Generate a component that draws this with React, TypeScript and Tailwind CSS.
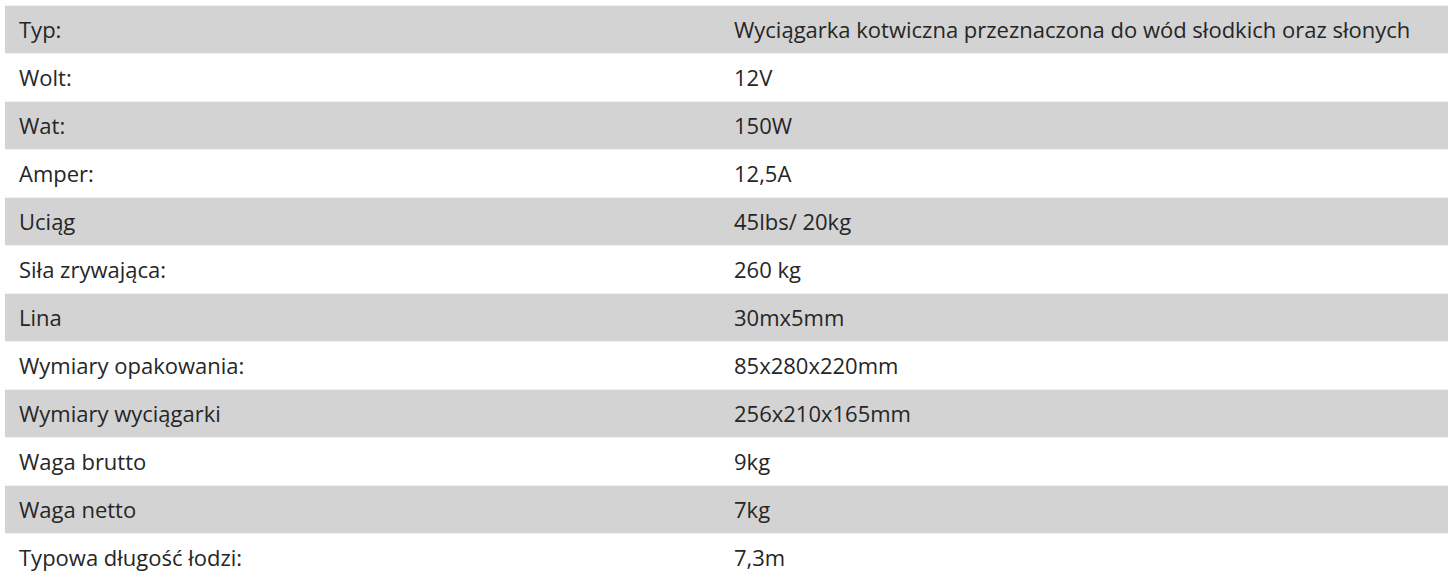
const rows: [string, string][] = [
  ['Typ:', 'Wyciągarka kotwiczna przeznaczona do wód słodkich oraz słonych'],
  ['Wolt:', '12V'],
  ['Wat:', '150W'],
  ['Amper:', '12,5A'],
  ['Uciąg', '45lbs/ 20kg'],
  ['Siła zrywająca:', '260 kg'],
  ['Lina', '30mx5mm'],
  ['Wymiary opakowania:', '85x280x220mm'],
  ['Wymiary wyciągarki', '256x210x165mm'],
  ['Waga brutto', '9kg'],
  ['Waga netto', '7kg'],
  ['Typowa długość łodzi:', '7,3m'],
]

export default function App() {
  return (
    <div className="bg-white h-[581px] overflow-hidden pt-[5px] px-[5px] font-['Open_Sans',sans-serif] text-[22px] text-[#262626]">
      <div className="w-[1443px]">
        {rows.map(([k, v], i) => (
          <div
            key={i}
            className={`grid grid-cols-[715px_1fr] h-[48px] items-center border-t border-[#f2f2f2] ${i % 2 === 0 ? 'bg-[#d3d3d3]' : 'bg-white'}`}
          >
            <div className="pl-[14px]">{k}</div>
            <div className="pl-[14px]">{v}</div>
          </div>
        ))}
      </div>
    </div>
  )
}
